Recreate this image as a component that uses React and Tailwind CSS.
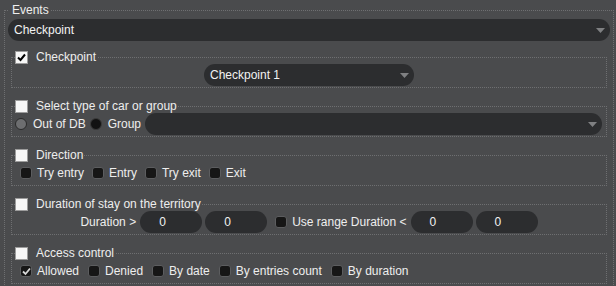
import React from 'react';

const font = { fontFamily: '"Liberation Sans", Arial, sans-serif' };

function Arrow() {
  return (
    <svg width="9" height="5" viewBox="0 0 9 5" className="shrink-0">
      <polygon points="0,0 9,0 4.5,5" fill="#7f8082" />
    </svg>
  );
}

function Combo({ value, className = '' }) {
  return (
    <div className={`flex h-[22px] items-center justify-between rounded-full bg-[#2c2d2f] pl-[6px] pr-[5px] text-[#f2f2f2] ${className}`}>
      <span>{value}</span>
      <Arrow />
    </div>
  );
}

function BigCheck({ checked }) {
  return (
    <span className="flex h-[13px] w-[13px] shrink-0 items-center justify-center border border-[#9c9c9c] bg-[#f7f7f7]">
      {checked && (
        <svg width="9" height="9" viewBox="0 0 9 9">
          <path d="M1 4.5 L3.5 7 L8 1.5" fill="none" stroke="#000" strokeWidth="2" />
        </svg>
      )}
    </span>
  );
}

function SmallCheck({ label, checked }) {
  return (
    <span className="flex items-center gap-[5px]">
      <span className="flex h-[12px] w-[12px] shrink-0 items-center justify-center rounded-[3px] border border-[#5c5d5f] bg-[#161616]">
        {checked && (
          <svg width="9" height="9" viewBox="0 0 9 9">
            <path d="M1 4.5 L3.5 7 L8 1.5" fill="none" stroke="#d8d8d8" strokeWidth="1.8" />
          </svg>
        )}
      </span>
      <span>{label}</span>
    </span>
  );
}

function Radio({ label, on }) {
  return (
    <span className="flex items-center gap-[6px]">
      <span className={`h-[12px] w-[12px] shrink-0 rounded-full border ${on ? 'border-[#2a2a2a] bg-[#6d6e70]' : 'border-[#3a3a3a] bg-[#121212]'}`} />
      <span>{label}</span>
    </span>
  );
}

function Field({ value }) {
  return (
    <div className="flex h-[22px] w-[62px] items-center rounded-full bg-[#2c2d2f] pl-[19px] text-[#f2f2f2]">
      {value}
    </div>
  );
}

function Group({ title, checked, className = '', children }) {
  return (
    <fieldset className={`mx-[3px] border border-dotted border-[#6e6f71] px-[3px] pb-[1px] ${className}`}>
      <legend className="flex h-[14px] items-center gap-[8px] pr-[1px]">
        <BigCheck checked={checked} />
        <span>{title}</span>
      </legend>
      {children}
    </fieldset>
  );
}

export default function App() {
  return (
    <div className="h-[286px] w-[616px] overflow-hidden bg-[#4a4b4d] pt-[3px] text-[12px] leading-[14px] text-[#eeeeee]" style={font}>
      <fieldset className="ml-[4px] mr-[2px] border border-dotted border-[#6e6f71] px-[3px] pb-[6px]">
        <legend className="h-[14px] pl-[4px] pr-[1px]">Events</legend>
        <Combo value="Checkpoint" className="mt-[2px]" />

        <Group title="Checkpoint" checked className="mt-[9px]">
          <div className="flex h-[22px] justify-center">
            <Combo value="Checkpoint 1" className="w-[210px]" />
          </div>
        </Group>

        <Group title="Select type of car or group" className="mt-[11px]">
          <div className="flex h-[22px] items-center gap-[4px] pr-[1px]">
            <Radio label="Out of DB" on />
            <Radio label="Group" />
            <Combo value="" className="flex-1" />
          </div>
        </Group>

        <Group title="Direction" className="mt-[11px]">
          <div className="flex h-[22px] items-center gap-[8px] pl-[5px]">
            <SmallCheck label="Try entry" />
            <SmallCheck label="Entry" />
            <SmallCheck label="Try exit" />
            <SmallCheck label="Exit" />
          </div>
        </Group>

        <Group title="Duration of stay on the territory" className="mt-[11px]">
          <div className="flex h-[22px] items-center justify-center gap-[3px]">
            <span className="mr-[1px]">Duration &gt;</span>
            <Field value="0" />
            <Field value="0" />
            <span className="ml-[5px] mr-[1px]">
              <SmallCheck label="Use range Duration <" />
            </span>
            <Field value="0" />
            <Field value="0" />
          </div>
        </Group>

        <Group title="Access control" className="mt-[11px]">
          <div className="flex h-[22px] items-center gap-[9px] pl-[5px]">
            <SmallCheck label="Allowed" checked />
            <SmallCheck label="Denied" />
            <SmallCheck label="By date" />
            <SmallCheck label="By entries count" />
            <SmallCheck label="By duration" />
          </div>
        </Group>
      </fieldset>
    </div>
  );
}
